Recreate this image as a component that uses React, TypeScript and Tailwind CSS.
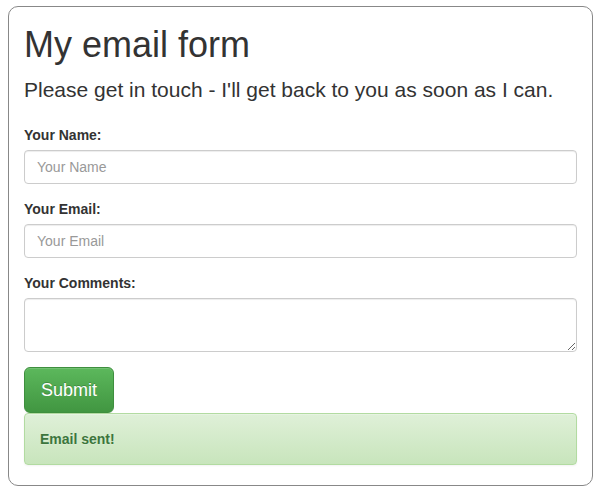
import { useState } from 'react';

// bootstrap-ish input styles
const inputCls =
  'block w-full h-[34px] px-3 py-[6px] text-sm text-[#555] bg-white border border-[#ccc] rounded-[4px] shadow-[inset_0_1px_1px_rgba(0,0,0,0.075)] placeholder:text-[#999] outline-none';

export default function App() {
  const [name, setName] = useState('');
  const [email, setEmail] = useState('');
  const [comments, setComments] = useState('');

  return (
    <div className="pt-[6px] pl-2 font-['Liberation_Sans',Arial,sans-serif] text-[#333]">
      <div className="w-[585px] border border-[#888] rounded-[10px] px-[15px] pt-[18px]">
        <h1 className="text-[36px] leading-[40px] mb-[10px]">My email form</h1>
        <p className="text-[21px] leading-[30px] mb-5">
          Please get in touch - I'll get back to you as soon as I can.
        </p>

        <div className="mb-[15px]">
          <label className="block text-sm font-bold leading-5 mb-[5px]">Your Name:</label>
          <input
            type="text"
            placeholder="Your Name"
            value={name}
            onChange={(e) => setName(e.target.value)}
            className={inputCls}
          />
        </div>

        <div className="mb-[15px]">
          <label className="block text-sm font-bold leading-5 mb-[5px]">Your Email:</label>
          <input
            type="email"
            placeholder="Your Email"
            value={email}
            onChange={(e) => setEmail(e.target.value)}
            className={inputCls}
          />
        </div>

        <div className="mb-[15px]">
          <label className="block text-sm font-bold leading-5 mb-[5px]">Your Comments:</label>
          <textarea
            rows={2}
            value={comments}
            onChange={(e) => setComments(e.target.value)}
            className="block w-full h-[54px] px-3 py-[6px] text-sm leading-5 text-[#555] bg-white border border-[#ccc] rounded-[4px] shadow-[inset_0_1px_1px_rgba(0,0,0,0.075)] outline-none resize-y"
          />
        </div>

        <button className="block h-[46px] px-4 text-[18px] leading-6 text-white border border-[#3e8f3e] rounded-[6px] bg-linear-to-b from-[#5cb85c] to-[#419641] [text-shadow:0_-1px_0_rgba(0,0,0,0.2)] shadow-[inset_0_1px_0_rgba(255,255,255,0.15),0_1px_1px_rgba(0,0,0,0.075)]">
          Submit
        </button>

        <div className="mb-5 p-[15px] text-sm leading-5 font-bold text-[#3c763d] border border-[#b2dba1] rounded-[4px] bg-linear-to-b from-[#dff0d8] to-[#c8e5bc] [text-shadow:0_1px_0_rgba(255,255,255,0.2)] shadow-[inset_0_1px_0_rgba(255,255,255,0.25),0_1px_2px_rgba(0,0,0,0.05)]">
          Email sent!
        </div>
      </div>
    </div>
  );
}
